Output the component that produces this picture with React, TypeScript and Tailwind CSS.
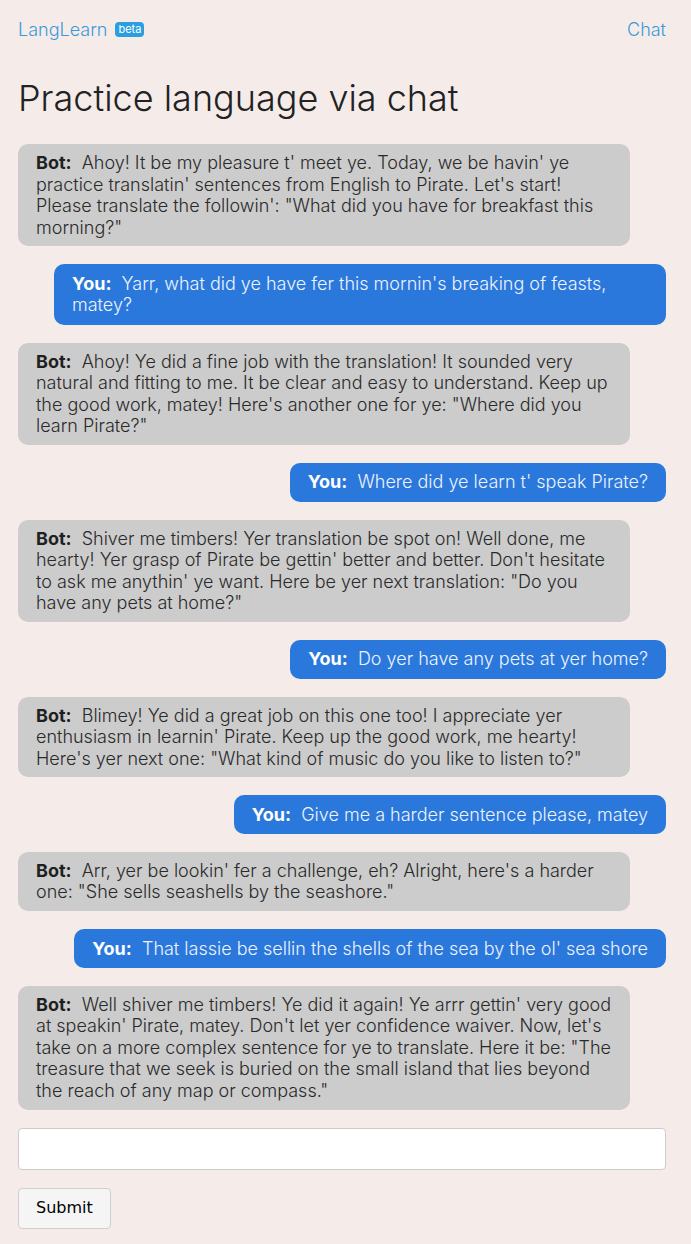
const messages: { from: 'bot' | 'you'; text: string }[] = [
  {
    from: 'bot',
    text: 'Ahoy! It be my pleasure t\' meet ye. Today, we be havin\' ye practice translatin\' sentences from English to Pirate. Let\'s start! Please translate the followin\': "What did you have for breakfast this morning?"',
  },
  { from: 'you', text: "Yarr, what did ye have fer this mornin's breaking of feasts, matey?" },
  {
    from: 'bot',
    text: 'Ahoy! Ye did a fine job with the translation! It sounded very natural and fitting to me. It be clear and easy to understand. Keep up the good work, matey! Here\'s another one for ye: "Where did you learn Pirate?"',
  },
  { from: 'you', text: "Where did ye learn t' speak Pirate?" },
  {
    from: 'bot',
    text: 'Shiver me timbers! Yer translation be spot on! Well done, me hearty! Yer grasp of Pirate be gettin\' better and better. Don\'t hesitate to ask me anythin\' ye want. Here be yer next translation: "Do you have any pets at home?"',
  },
  { from: 'you', text: 'Do yer have any pets at yer home?' },
  {
    from: 'bot',
    text: 'Blimey! Ye did a great job on this one too! I appreciate yer enthusiasm in learnin\' Pirate. Keep up the good work, me hearty! Here\'s yer next one: "What kind of music do you like to listen to?"',
  },
  { from: 'you', text: 'Give me a harder sentence please, matey' },
  {
    from: 'bot',
    text: 'Arr, yer be lookin\' fer a challenge, eh? Alright, here\'s a harder one: "She sells seashells by the seashore."',
  },
  { from: 'you', text: "That lassie be sellin the shells of the sea by the ol' sea shore" },
  {
    from: 'bot',
    text: 'Well shiver me timbers! Ye did it again! Ye arrr gettin\' very good at speakin\' Pirate, matey. Don\'t let yer confidence waiver. Now, let\'s take on a more complex sentence for ye to translate. Here it be: "The treasure that we seek is buried on the small island that lies beyond the reach of any map or compass."',
  },
];

export default function App() {
  return (
    <div className="min-h-screen bg-[#f5ecea] pl-[18px] pr-[25px] pt-[18px] pb-4 font-['Inter',sans-serif]">
      <header className="flex items-center justify-between h-[22px]">
        <div className="flex items-center gap-2">
          <a href="#" className="text-[18px] text-[#3a9ad7] font-light">LangLearn</a>
          <span className="rounded-[4px] bg-[#2a9fe0] px-[3px] text-[11px] leading-[15px] text-white">beta</span>
        </div>
        <a href="#" className="text-[18px] text-[#3a9ad7] font-light">Chat</a>
      </header>

      <h1 className="mt-[36px] text-[36px] leading-[44px] font-light text-[#222]">Practice language via chat</h1>

      <div className="mt-[24px] flex flex-col gap-[18px]">
        {messages.map((m, i) =>
          m.from === 'bot' ? (
            <div key={i} className="mr-[36px] rounded-[10px] bg-[#cccccc] px-[18px] py-[8px] text-[18px] leading-[21.6px] font-light text-[#2a2a2a]">
              <b className="font-bold text-[#1f1f1f]">Bot:</b>&nbsp; {m.text}
            </div>
          ) : (
            <div key={i} className="ml-[36px] self-end rounded-[10px] bg-[#2a78db] px-[18px] py-[8.5px] text-[18px] leading-[21.6px] font-light text-[#eef3fc]">
              <b className="font-bold text-white">You:</b>&nbsp; {m.text}
            </div>
          )
        )}
      </div>

      <input
        type="text"
        className="mt-[18px] block h-[42px] w-full rounded-[4px] border border-[#cccccc] bg-white px-3 text-[16px] outline-none"
      />
      <button className="mt-[18px] block h-[41px] rounded-[4px] border border-[#cfcfcf] bg-[#f5f5f5] px-[17px] text-[16px] text-black font-['DejaVu_Sans',sans-serif]">
        Submit
      </button>
    </div>
  );
}
